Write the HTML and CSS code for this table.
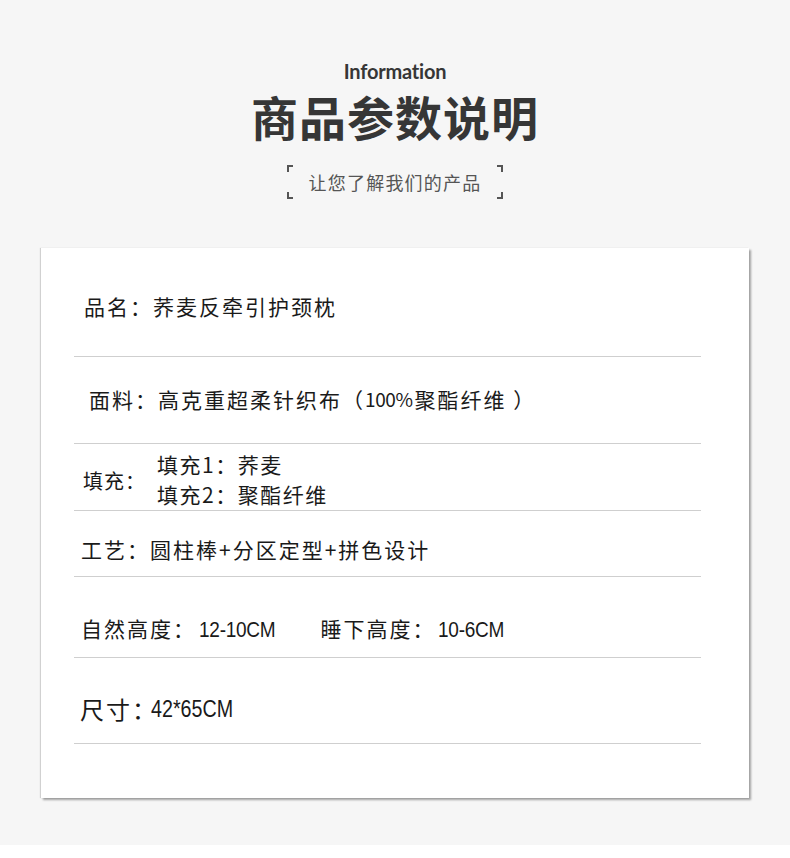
FILE: index.html
```html
<!DOCTYPE html>
<html lang="zh-CN">
<head>
  <meta charset="UTF-8" />
  <meta name="viewport" content="width=device-width, initial-scale=1.0"/>
  <title>商品参数说明</title>
  <link rel="stylesheet" href="styles.css">
</head>
<body>
  <div class="page">
    <div class="header">
      <div class="eyebrow">Information</div>
      <h1>商品参数说明</h1>
      <div class="sub">让您了解我们的产品</div>
    </div>

    <div class="card">
      <div class="row row-name">品名：荞麦反牵引护颈枕</div>
      <div class="row row-fabric">面料：高克重超柔针织布（<span class="pct">100%</span>聚酯纤维 ）</div>
      <div class="row row-fill">
        <span class="fill-label">填充：</span>
        <div class="fill-list">
          <div>填充1：荞麦</div>
          <div>填充2：聚酯纤维</div>
        </div>
      </div>
      <div class="row row-craft">工艺：圆柱棒+分区定型+拼色设计</div>
      <div class="row row-height">
        <span>自然高度：<span class="num num-a">12-10CM</span></span>
        <span class="gap-item">睡下高度：<span class="num num-b">10-6CM</span></span>
      </div>
      <div class="row row-size">尺寸<span class="tight">：</span><span class="num narrow">42*65CM</span></div>
    </div>
  </div>
</body>
</html>
```

FILE: styles.css
```css
:root {
  --bg: #f6f6f6;
  --text: #1a1a1a;
  --title: #363636;
  --muted: #555555;
  --line: #cfcfcf;
}

* {
  box-sizing: border-box;
  margin: 0;
  padding: 0;
}

body {
  background: #ffffff;
  font-family: "Noto Sans CJK SC", "Noto Sans", sans-serif;
  color: var(--text);
}

.page {
  height: 845px;
  background: var(--bg);
  padding-top: 59px;
}

.header {
  display: flex;
  flex-direction: column;
  align-items: center;
}

.eyebrow {
  font-family: "Lato", "DejaVu Sans", sans-serif;
  font-weight: 700;
  font-size: 20px;
  line-height: 24px;
  color: var(--title);
  letter-spacing: -0.2px;
}

h1 {
  font-size: 47px;
  font-weight: 700;
  line-height: 60px;
  color: var(--title);
  letter-spacing: 1px;
  margin-top: 3px;
}

.sub {
  position: relative;
  width: 216px;
  height: 34px;
  margin-top: 19px;
  display: flex;
  align-items: center;
  justify-content: center;
  font-size: 18px;
  letter-spacing: 1.2px;
  color: var(--muted);
}

/* corner brackets */
.sub::before,
.sub::after {
  content: '';
  position: absolute;
  top: 0;
  bottom: 0;
  width: 6px;
}

.sub::before {
  left: 0;
  background:
    linear-gradient(var(--muted), var(--muted)) 0 0 / 6px 2px no-repeat,
    linear-gradient(var(--muted), var(--muted)) 0 0 / 2px 7px no-repeat,
    linear-gradient(var(--muted), var(--muted)) 0 100% / 6px 2px no-repeat,
    linear-gradient(var(--muted), var(--muted)) 0 100% / 2px 7px no-repeat;
}

.sub::after {
  right: 0;
  background:
    linear-gradient(var(--muted), var(--muted)) 100% 0 / 6px 2px no-repeat,
    linear-gradient(var(--muted), var(--muted)) 100% 0 / 2px 7px no-repeat,
    linear-gradient(var(--muted), var(--muted)) 100% 100% / 6px 2px no-repeat,
    linear-gradient(var(--muted), var(--muted)) 100% 100% / 2px 7px no-repeat;
}

.card {
  width: 708px;
  height: 550px;
  margin: 49px 0 0 41px;
  background: #ffffff;
  padding: 0 48px 0 33px;
  box-shadow: 2px 2px 2px rgba(0, 0, 0, 0.35), -1px 0 1px rgba(0, 0, 0, 0.15);
}

.row {
  display: flex;
  align-items: flex-start;
  border-bottom: 1px solid var(--line);
  font-size: 21px;
  line-height: 24px;
  letter-spacing: 2px;
}

.row-name {
  height: 109px;
  padding: 46px 0 0 10px;
}

.row-fabric {
  height: 87px;
  padding: 30px 0 0 15px;
}

.pct {
  font-size: 19px;
  letter-spacing: -0.4px;
  margin-right: 2px;
}

.row-fill {
  height: 67px;
  padding: 5px 0 0 9px;
  font-size: 20px;
  letter-spacing: 1px;
}

.fill-label {
  align-self: center;
  margin-top: 2px;
  margin-right: 11px;
}

.fill-list {
  line-height: 30px;
  font-size: 21px;
  letter-spacing: 1.5px;
}

.row-craft {
  height: 66px;
  padding: 26px 0 0 7px;
}

.row-height {
  height: 81px;
  padding: 39px 0 0 7px;
}

.row-size {
  height: 86px;
  padding: 37px 0 0 6px;
  font-size: 24px;
  line-height: 28px;
}

.gap-item {
  margin-left: 45px;
}

/* latin figures are drawn narrow in the reference */
.num {
  display: inline-block;
  font-family: "Liberation Sans", Arial, sans-serif;
  font-size: 22px;
  letter-spacing: -0.3px;
  transform: scaleX(0.865);
  transform-origin: left center;
}

.num-a {
  margin-left: 3px;
  margin-right: -12px;
}

.num-b {
  margin-left: 3px;
  margin-right: -10px;
}

.tight {
  letter-spacing: -5px;
}

.narrow {
  font-size: 24px;
  letter-spacing: 0;
  transform: scaleX(0.82);
}
```
